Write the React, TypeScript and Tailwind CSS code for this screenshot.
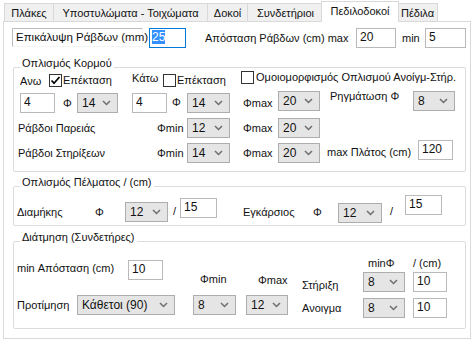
import React from 'react';
import clsx from 'clsx';

const Chevron = () => (
    <svg width="9" height="6" viewBox="0 0 9 6" className="shrink-0">
        <path d="M1 1 L4.5 4.5 L8 1" fill="none" stroke="#6e6e6e" strokeWidth="1.5" />
    </svg>
);

const Combo = ({ value, className }: { value: string; className?: string }) => (
    <div className={clsx('h-[20px] shrink-0 bg-[#e5e5e5] border border-[#adadad] flex items-center justify-between pl-[4px] pr-[6px] leading-[18px] text-[12px]', className)}>
        <span>{value}</span>
        <Chevron />
    </div>
);

const TextBox = ({ value, className }: { value: string; className?: string }) => (
    <div className={clsx('h-[20px] shrink-0 bg-white border border-[#b9b9b9] pl-[3px] leading-[16px] text-[12px]', className)}>
        {value}
    </div>
);

const CheckBox = ({ checked }: { checked?: boolean }) => (
    <div className="w-[13px] h-[13px] shrink-0 border border-[#333] bg-white flex items-center justify-center">
        {checked && (
            <svg width="11" height="11" viewBox="0 0 11 11">
                <path d="M1.5 5.5 L4 8.2 L9.5 2" fill="none" stroke="#000" strokeWidth="1.7" />
            </svg>
        )}
    </div>
);

const Label = ({ children, className }: { children: React.ReactNode; className?: string }) => (
    <div className={clsx('shrink-0 whitespace-nowrap', className)}>{children}</div>
);

const Tab = ({ label, selected, className }: { label: string; selected?: boolean; className?: string }) => (
    <div
        className={clsx(
            'shrink-0 text-center whitespace-nowrap border-[#d9d9d9]',
            selected
                ? 'h-[21px] bg-white border-l border-t border-r relative z-20 leading-[18px]'
                : 'h-[19px] bg-[#f0f0f0] border relative z-10 leading-[18px]',
            className
        )}
    >
        {label}
    </div>
);

const GroupTitle = ({ children }: { children: React.ReactNode }) => (
    <div className="-mt-[12px] ml-[6px] px-[2px] bg-white w-fit leading-[14px] whitespace-nowrap">{children}</div>
);

export default function App() {
    return (
        <div className="w-[473px] h-[342px] bg-white overflow-hidden text-[11px] text-[#111] [font-family:'Liberation_Sans',Arial,sans-serif]">
            {/* tabs */}
            <div className="flex items-end h-[22px] pl-[4px]">
                <Tab label="Πλάκες" className="w-[50px]" />
                <Tab label="Υποστυλώματα - Τοιχώματα" className="w-[155px] -ml-px" />
                <Tab label="Δοκοί" className="w-[41px] -ml-px" />
                <Tab label="Συνδετήριοι" className="w-[77px] -ml-px" />
                <Tab label="Πεδιλοδοκοί" selected className="w-[78px] -ml-[3px]" />
                <Tab label="Πέδιλα" className="w-[41px] -ml-[2px]" />
            </div>

            {/* tab page */}
            <div className="w-[468px] h-[318px] ml-[3px] -mt-[1px] border border-[#d9d9d9] bg-white">
                {/* row 1 */}
                <div className="flex items-start mt-[6px]">
                    <div className="ml-[8px] w-[131px] h-[19px] bg-white border-t border-l border-[#bcbcbc] border-b border-r border-b-[#f4f4f4] border-r-[#f4f4f4] pl-[3px] leading-[17px] whitespace-nowrap text-[11.5px]">
                        Επικάλυψη Ράβδων (mm)
                    </div>
                    <div className="ml-[6px] w-[37px] h-[20px] bg-white border border-[#0078d7] pl-[2px] pt-[1px] leading-[15px] text-[12px]">
                        <span className="bg-[#3390ff] text-white">25</span>
                    </div>
                    <Label className="ml-[19px] w-[151px] leading-[20px]">Απόσταση Ράβδων (cm) max</Label>
                    <TextBox value="20" className="w-[40px]" />
                    <Label className="ml-[6px] w-[23px] leading-[20px]">min</Label>
                    <TextBox value="5" className="w-[41px]" />
                </div>

                {/* Οπλισμός Κορμού */}
                <div className="ml-[9px] mt-[19px] w-[453px] h-[105px] border border-[#dcdcdc] rounded-[2px]">
                    <GroupTitle>Οπλισμός Κορμού</GroupTitle>

                    <div className="flex items-start mt-[4px] h-[13px]">
                        <Label className="ml-[6px] w-[29px] leading-[13px] mt-[1px]">Ανω</Label>
                        <CheckBox checked />
                        <Label className="ml-[1px] w-[69px] leading-[13px]">Επέκταση</Label>
                        <Label className="w-[31px] leading-[13px] -mt-[2px]">Κάτω</Label>
                        <CheckBox />
                        <Label className="ml-[1px] w-[64px] leading-[13px]">Επέκταση</Label>
                        <div className="flex items-start -mt-[3px]">
                            <CheckBox />
                            <Label className="ml-[2px] leading-[13px]">Ομοιομορφισμός Οπλισμού Ανοίγμ-Στήρ.</Label>
                        </div>
                    </div>

                    <div className="flex items-start mt-[6px] h-[20px]">
                        <TextBox value="4" className="ml-[6px] w-[35px]" />
                        <Label className="ml-[8px] w-[14px] leading-[20px]">Φ</Label>
                        <Combo value="14" className="w-[41px]" />
                        <TextBox value="4" className="ml-[14px] w-[35px]" />
                        <Label className="ml-[5px] w-[15px] leading-[18px]">Φ</Label>
                        <Combo value="14" className="w-[43px]" />
                        <Label className="ml-[13px] w-[35px] leading-[20px]">Φmax</Label>
                        <Combo value="20" className="w-[42px] -mt-[2px]" />
                        <Label className="ml-[10px] w-[83px] leading-[14px] -mt-[4px]">Ρηγμάτωση Φ</Label>
                        <Combo value="8" className="w-[42px] -mt-[2px]" />
                    </div>

                    <div className="flex items-start mt-[5px] h-[20px]">
                        <Label className="ml-[4px] w-[139px] leading-[20px]">Ράβδοι Παρειάς</Label>
                        <Label className="w-[30px] leading-[20px]">Φmin</Label>
                        <Combo value="12" className="w-[43px]" />
                        <Label className="ml-[13px] w-[35px] leading-[20px]">Φmax</Label>
                        <Combo value="20" className="w-[42px]" />
                    </div>

                    <div className="flex items-start mt-[5px] h-[20px]">
                        <Label className="ml-[4px] w-[139px] leading-[20px]">Ράβδοι Στηρίξεων</Label>
                        <Label className="w-[30px] leading-[20px]">Φmin</Label>
                        <Combo value="14" className="w-[43px]" />
                        <Label className="ml-[13px] w-[35px] leading-[20px]">Φmax</Label>
                        <Combo value="20" className="w-[42px]" />
                        <Label className="ml-[7px] w-[91px] leading-[18px]">max Πλάτος (cm)</Label>
                        <TextBox value="120" className="w-[35px] -mt-[3px]" />
                    </div>
                </div>

                {/* Οπλισμός Πέλματος */}
                <div className="ml-[9px] mt-[14px] w-[453px] h-[40px] border border-[#dcdcdc] rounded-[2px]">
                    <GroupTitle>Οπλισμός Πέλματος / (cm)</GroupTitle>
                    <div className="flex items-start mt-[6px]">
                        <Label className="ml-[3px] w-[78px] mt-[10px] leading-[14px]">Διαμήκης</Label>
                        <Label className="w-[30px] mt-[10px] leading-[14px]">Φ</Label>
                        <Combo value="12" className="w-[43px] mt-[7px]" />
                        <Label className="ml-[5px] w-[7px] mt-[9px] leading-[14px]">/</Label>
                        <TextBox value="15" className="w-[37px] mt-[3px]" />
                        <Label className="ml-[26px] w-[70px] mt-[10px] leading-[14px]">Εγκάρσιος</Label>
                        <Label className="w-[25px] mt-[10px] leading-[14px]">Φ</Label>
                        <Combo value="12" className="w-[44px] mt-[8px]" />
                        <Label className="ml-[8px] w-[15px] mt-[9px] leading-[14px]">/</Label>
                        <TextBox value="15" className="w-[37px]" />
                    </div>
                </div>

                {/* Διάτμηση */}
                <div className="ml-[9px] mt-[15px] w-[453px] h-[88px] border border-[#dcdcdc] rounded-[2px]">
                    <GroupTitle>Διάτμηση (Συνδετήρες)</GroupTitle>
                    <div className="flex items-start">
                        <div className="ml-[3px] w-[158px] flex flex-col">
                            <div className="flex items-start mt-[16px]">
                                <Label className="w-[111px] mt-[1px] leading-[14px]">min Απόσταση (cm)</Label>
                                <TextBox value="10" className="w-[35px]" />
                            </div>
                            <div className="flex items-center mt-[15px]">
                                <Label className="w-[60px] leading-[14px]">Προτίμηση</Label>
                                <Combo value="Κάθετοι (90)" className="w-[98px]" />
                            </div>
                        </div>
                        <div className="ml-[18px] w-[43px] flex flex-col">
                            <Label className="mt-[28px] leading-[14px] pl-[7px]">Φmin</Label>
                            <Combo value="8" className="w-[43px] mt-[9px]" />
                        </div>
                        <div className="ml-[10px] w-[42px] flex flex-col">
                            <Label className="mt-[29px] leading-[14px] pl-[12px]">Φmax</Label>
                            <Combo value="12" className="w-[42px] mt-[8px]" />
                        </div>
                        <div className="ml-[14px] w-[61px] flex flex-col">
                            <Label className="mt-[34px] leading-[14px]">Στήριξη</Label>
                            <Label className="mt-[9px] leading-[14px]">Ανοιγμα</Label>
                        </div>
                        <div className="w-[42px] flex flex-col">
                            <Label className="mt-[12px] leading-[14px] pl-[5px]">minΦ</Label>
                            <Combo value="8" className="w-[42px] mt-[2px]" />
                            <Combo value="8" className="w-[42px] mt-[6px]" />
                        </div>
                        <div className="ml-[8px] w-[34px] flex flex-col">
                            <Label className="mt-[12px] leading-[14px]">/ (cm)</Label>
                            <TextBox value="10" className="w-[34px] mt-[2px]" />
                            <TextBox value="10" className="w-[34px] mt-[6px]" />
                        </div>
                    </div>
                </div>
            </div>
        </div>
    );
}
